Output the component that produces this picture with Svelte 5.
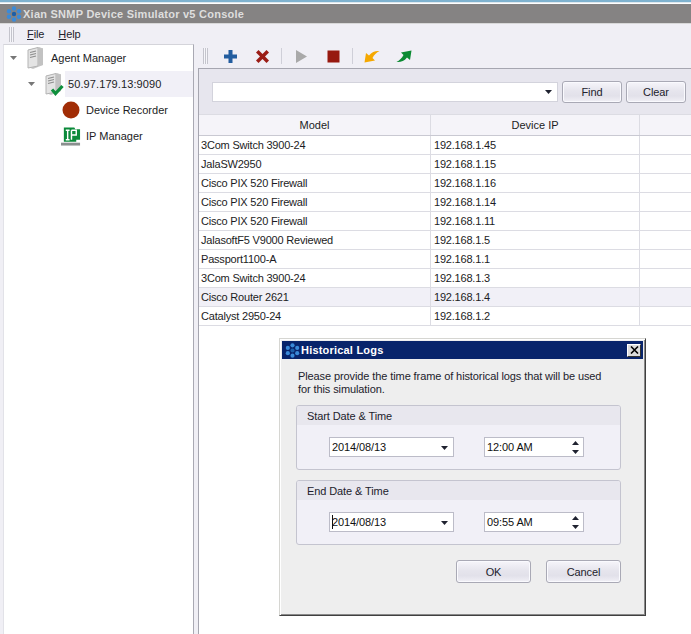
<script>
  const rows = [
    ['3Com Switch 3900-24', '192.168.1.45'],
    ['JalaSW2950', '192.168.1.15'],
    ['Cisco PIX 520 Firewall', '192.168.1.16'],
    ['Cisco PIX 520 Firewall', '192.168.1.14'],
    ['Cisco PIX 520 Firewall', '192.168.1.11'],
    ['JalasoftF5 V9000 Reviewed', '192.168.1.5'],
    ['Passport1100-A', '192.168.1.1'],
    ['3Com Switch 3900-24', '192.168.1.3'],
    ['Cisco Router 2621', '192.168.1.4'],
    ['Catalyst 2950-24', '192.168.1.2']
  ];
  const groups = [
    { title: 'Start Date & Time', date: '2014/08/13', time: '12:00 AM', caret: false },
    { title: 'End Date & Time', date: '2014/08/13', time: '09:55 AM', caret: true }
  ];
</script>

{#snippet snow(size)}
  <svg class="snow" width={size} height={size} viewBox="0 0 16 16">
    <g fill="#3a8ad8">
      <circle cx="8" cy="2.5" r="2.2" /><circle cx="8" cy="13.5" r="2.2" />
      <circle cx="3" cy="5.2" r="2.2" /><circle cx="13" cy="5.2" r="2.2" />
      <circle cx="3" cy="10.8" r="2.2" /><circle cx="13" cy="10.8" r="2.2" />
      <circle cx="8" cy="8" r="2.2" fill="#1c5fa8" />
    </g>
  </svg>
{/snippet}

{#snippet server(check)}
  <svg width="20" height="24" viewBox="0 0 20 24">
    <path d="M2 4 L13 1 L17 2.500 V19 L7 23 L2 21 Z" fill="#c9c9c9" />
    <path d="M2 4 L12 1.500 V20 L2 22 Z" fill="#e4e4e4" stroke="#b4b4b4" stroke-width="1" />
    <path d="M12 1.500 L17 2.500 V19 L12 20 Z" fill="#c2c2c2" />
    <path d="M4 6.500 L10 5M4 9 L10 7.500M4 11.500 L10 10" stroke="#8e8e8e" stroke-width="1.200" />
    {#if check}
      <path d="M8 17.500 L11.500 21.500 L18.500 14" fill="none" stroke="#0e8f3c" stroke-width="3.200" />
    {/if}
  </svg>
{/snippet}

{#snippet updown()}
  <span class="spin">
    <svg width="9" height="17" viewBox="0 0 9 17">
      <path d="M4.5 2 L8 6 H1 Z M4.5 15 L1 11 H8 Z" fill="#1f2230" />
    </svg>
  </span>
{/snippet}

{#snippet ddarrow()}
  <svg class="arrow" width="7" height="4" viewBox="0 0 7 4"><path d="M0 0H7L3.5 4Z" fill="#1f2230" /></svg>
{/snippet}

<div class="app">
  <div class="topline"></div>
  <div class="titlebar">
    {@render snow(16)}
    <span class="apptitle">Xian SNMP Device Simulator v5 Console</span>
  </div>
  <div class="menubar">
    <span class="grip"></span>
    <span class="menu"><u>F</u>ile</span>
    <span class="menu"><u>H</u>elp</span>
  </div>
  <div class="main">
    <aside class="tree">
      <div class="node n0">
        <svg class="exp" width="7" height="4" viewBox="0 0 7 4"><path d="M0 0H7L3.5 4Z" fill="#777" /></svg>
        <span class="ico">{@render server(false)}</span>
        <span class="label">Agent Manager</span>
      </div>
      <div class="node n1">
        <svg class="exp" width="7" height="4" viewBox="0 0 7 4"><path d="M0 0H7L3.5 4Z" fill="#777" /></svg>
        <span class="ico">{@render server(true)}</span>
        <span class="label sel">50.97.179.13:9090</span>
      </div>
      <div class="node n2">
        <span class="ico">
          <svg width="18" height="18" viewBox="0 0 18 18"><circle cx="9" cy="9" r="8.5" fill="#a12d06" /></svg>
        </span>
        <span class="label">Device Recorder</span>
      </div>
      <div class="node n2">
        <span class="ico">
          <svg width="21" height="21" viewBox="0 0 21 21">
            <path d="M3 1 H14 L15 3 H20 V14 H16 V16 H3 Z" fill="#0b8a3a" />
            <path d="M7 4v10M5 4h4M5 14h4M11 4v10M11 4h5v5h-5" fill="none" stroke="#fff" stroke-width="1.500" />
            <rect x="0" y="17" width="20" height="3" fill="#8a8f8f" />
          </svg>
        </span>
        <span class="label">IP Manager</span>
      </div>
    </aside>
    <section class="content">
      <div class="toolbar">
        <span class="grip"></span>
        <button class="tool first" aria-label="Add">
          <svg width="15" height="15" viewBox="0 0 15 15"><path d="M5.500 1H9.500V5.500H14V9.500H9.500V14H5.500V9.500H1V5.500H5.500Z" fill="#235d9f" /></svg>
        </button>
        <button class="tool" aria-label="Delete">
          <svg width="15" height="15" viewBox="0 0 15 15"><path d="M3.500 1L7.500 5L11.500 1L14 3.500L10 7.500L14 11.500L11.500 14L7.500 10L3.500 14L1 11.500L5 7.500L1 3.500Z" fill="#9b1d16" /></svg>
        </button>
        <span class="sep"></span>
        <button class="tool" aria-label="Play">
          <svg width="15" height="15" viewBox="0 0 15 15"><path d="M2 1L13 7.500L2 14Z" fill="#a9a9a9" /></svg>
        </button>
        <button class="tool" aria-label="Stop">
          <svg width="15" height="15" viewBox="0 0 15 15"><rect x="1.500" y="1.500" width="12" height="12" fill="#97190f" /></svg>
        </button>
        <span class="sep"></span>
        <button class="tool" aria-label="Back">
          <svg width="16" height="13" viewBox="0 0 16 13"><path d="M0.500 12.500L2 3L5 5.500C8 1.500 12 0.500 15.500 1C12.500 2.500 10 5 8.500 8L11 10.500Z" fill="#f5a800" /></svg>
        </button>
        <button class="tool" aria-label="Forward">
          <svg width="16" height="13" viewBox="0 0 16 13"><path d="M15.500 0.500L14 10L11 7.500C8 11.500 4 12.500 0.500 12C3.500 10.500 6 8 7.500 5L5 2.500Z" fill="#0b8a32" /></svg>
        </button>
      </div>
      <div class="filter">
        <div class="combo filtercombo">{@render ddarrow()}</div>
        <button class="btn find">Find</button>
        <button class="btn find">Clear</button>
      </div>
      <div class="grid">
        <div class="row head">
          <div class="c1">Model</div>
          <div class="c2">Device IP</div>
          <div class="c3"></div>
        </div>
        {#each rows as r, i}
          <div class="row" class:hl={i === 8}>
            <div class="c1">{r[0]}</div>
            <div class="c2">{r[1]}</div>
            <div class="c3"></div>
          </div>
        {/each}
      </div>
    </section>
  </div>

  <div class="dialog">
    <div class="dtitle">
      {@render snow(15)}
      <span class="dname">Historical Logs</span>
      <span class="close">
        <svg width="9" height="8" viewBox="0 0 9 8"><path d="M1 0.500L8 7.500M8 0.500L1 7.500" stroke="#000" stroke-width="1.600" /></svg>
      </span>
    </div>
    <div class="dbody">
      <p class="desc">Please provide the time frame of historical logs that will be used<br />for this simulation.</p>
      {#each groups as g}
        <div class="group">
          <div class="ghead">{g.title}</div>
          <div class="gbody">
            <div class="combo date">
              {#if g.caret}<span class="caret"></span>{/if}
              <span>{g.date}</span>
              {@render ddarrow()}
            </div>
            <div class="combo time">
              <span>{g.time}</span>
              {@render updown()}
            </div>
          </div>
        </div>
      {/each}
      <div class="actions">
        <button class="btn dbtn">OK</button>
        <button class="btn dbtn">Cancel</button>
      </div>
    </div>
  </div>
</div>

<style>
  :global(body) { margin: 0; background: #fff; }
  .app {
    position: relative;
    width: 691px;
    height: 634px;
    overflow: hidden;
    display: flex;
    flex-direction: column;
    font: 11px "Liberation Sans", sans-serif;
    letter-spacing: -0.1px;
    color: #1c1c24;
    background: #f0eff5;
  }
  .topline {
    height: 4px;
    flex: none;
    background: linear-gradient(#7fb2cf 0 2px, #dfe8ee 2px 3px, #fff 3px);
  }
  .titlebar {
    height: 19px;
    flex: none;
    background: #858383;
    display: flex;
    align-items: center;
    padding-left: 6px;
    gap: 1px;
    border-bottom: 1px solid #d8d8d8;
  }
  .apptitle { color: #dedede; font-weight: 700; font-size: 11px; letter-spacing: 0.25px; }
  .menubar {
    height: 20px;
    flex: none;
    display: flex;
    align-items: center;
    background: #f0eff5;
  }
  .grip {
    width: 5px;
    height: 15px;
    margin-left: 9px;
    flex: none;
    background: repeating-linear-gradient(90deg, #c4c4cc 0 1px, #f6f6fa 1px 2px);
  }
  .menu { margin-left: 13px; font-size: 11px; color: #22222c; }
  .menu + .menu { margin-left: 14px; }
  .main { flex: 1; display: flex; min-height: 0; }
  .tree {
    width: 191px;
    margin-left: 3px;
    flex: none;
    background: #fff;
    border-top: 1px solid #d4d4da;
    border-right: 1px solid #a9a9b3;
    border-left: 1px solid #e2e2e8;
    box-sizing: border-box;
    letter-spacing: 0;
  }
  .node { height: 26px; display: flex; align-items: center; position: relative; }
  .exp { flex: none; margin-left: 6px; }
  .ico { display: flex; align-items: center; justify-content: center; flex: none; width: 20px; }
  .n0 .ico { margin-left: 9px; }
  .n0 .label { margin-left: 5px; }
  .n1 { padding-left: 17px; }
  .n1 .exp { margin-left: 7px; }
  .n1 .ico { margin-left: 9px; }
  .n1 .label.sel {
    flex: 1;
    margin-left: 1px;
    padding-left: 3px;
    line-height: 26px;
    background: #f1f0f7;
    letter-spacing: 0.1px;
  }
  .n2 { padding-left: 57px; }
  .n2 .label { margin-left: 5px; }
  .content {
    flex: 1;
    margin-left: 4px;
    min-width: 0;
    display: flex;
    flex-direction: column;
  }
  .toolbar {
    height: 24px;
    flex: none;
    display: flex;
    align-items: center;
  }
  .toolbar .grip { margin-left: 5px; height: 16px; }
  .tool {
    width: 32px;
    height: 22px;
    padding: 0;
    border: 0;
    background: none;
    display: flex;
    align-items: center;
    justify-content: center;
  }
  .tool.first { margin-left: 6px; }
  .sep { width: 1px; height: 16px; background: #cfcfd8; flex: none; margin: 0 3px; }
  .filter {
    height: 46px;
    flex: none;
    box-sizing: border-box;
    background: #e7e6ee;
    border-top: 1px solid #a6a6b0;
    border-left: 1px solid #a6a6b0;
    display: flex;
    align-items: center;
    padding: 0 5px 0 13px;
    gap: 4px;
  }
  .combo {
    position: relative;
    display: flex;
    align-items: center;
    box-sizing: border-box;
    background: #fff;
    border: 1px solid #bcbcc8;
    height: 20px;
    padding-left: 2px;
    color: #111;
  }
  .filtercombo { width: 346px; border-color: #d3d3dc; }
  .arrow { position: absolute; right: 5px; top: 7px; }
  .btn {
    font: inherit;
    letter-spacing: inherit;
    color: #22222c;
    padding: 0;
    border: 1px solid #a9a9b5;
    border-radius: 3px;
    background: linear-gradient(#f6f5fa, #e6e5ed 45%, #e2e1ea 70%, #f1f0f6);
    box-shadow: inset 0 0 0 1px #fafafe;
  }
  .find { width: 60px; height: 22px; }
  .grid { flex: 1; background: #fff; border-left: 1px solid #a6a6b0; letter-spacing: -0.2px; }
  .row {
    display: flex;
    height: 19px;
    line-height: 18px;
    box-sizing: border-box;
    border-bottom: 1px solid #dcdce3;
    white-space: nowrap;
  }
  .row.head {
    height: 22px;
    line-height: 20px;
    background: #f5f4f9;
    border-top: 1px solid #dcdce3;
    border-bottom: 1px solid #c9c9d2;
    text-align: center;
    letter-spacing: 0;
  }
  .hl { background: #f1f0f7; }
  .c1 { width: 232px; padding-left: 2px; box-sizing: border-box; border-right: 1px solid #dcdce3; }
  .c2 { width: 209px; padding-left: 3px; box-sizing: border-box; border-right: 1px solid #dcdce3; }
  .head .c1, .head .c2 { padding-left: 0; }
  .c3 { flex: 1; }

  .dialog {
    position: absolute;
    left: 279px;
    top: 338px;
    width: 367px;
    height: 278px;
    box-sizing: border-box;
    background: #eeeeee;
    border: 1px solid;
    border-color: #d6d6d2 #404040 #404040 #d6d6d2;
    box-shadow: inset 1px 1px 0 #fff, inset -1px -1px 0 #8a8a8a;
    padding: 2px;
    display: flex;
    flex-direction: column;
  }
  .dtitle {
    height: 18px;
    flex: none;
    background: #08246b;
    display: flex;
    align-items: center;
    padding-left: 3px;
    gap: 1px;
  }
  .dname { color: #fff; font-weight: 700; font-size: 11px; letter-spacing: 0.2px; }
  .close {
    margin-left: auto;
    margin-right: 2px;
    width: 14px;
    height: 13px;
    box-sizing: border-box;
    background: #dcdcdc;
    border: 1px solid;
    border-color: #fff #333 #333 #fff;
    display: flex;
    align-items: center;
    justify-content: center;
  }
  .dbody { padding: 11px 0 0 14px; flex: 1; }
  .desc { margin: 0 0 9px 2px; line-height: 13px; color: #22222c; }
  .group {
    width: 325px;
    height: 65px;
    box-sizing: border-box;
    border: 1px solid #c4c4cf;
    border-radius: 3px;
    background: #f1f0f7;
    margin-bottom: 10px;
    overflow: hidden;
  }
  .ghead {
    height: 19px;
    line-height: 20px;
    padding-left: 10px;
    background: #e8e7ee;
    color: #22222c;
  }
  .gbody { display: flex; align-items: center; padding: 12px 0 0 32px; }
  .date { width: 125px; }
  .time { width: 100px; margin-left: 30px; }
  .combo .arrow { top: 8px; }
  .filtercombo .arrow { top: 7px; }
  .spin { position: absolute; right: 3px; top: 1px; display: flex; }
  .caret { position: absolute; left: 2px; top: 2px; width: 1px; height: 14px; background: #111; }
  .actions { width: 325px; display: flex; justify-content: flex-end; gap: 15px; margin-top: 15px; }
  .dbtn { width: 75px; height: 23px; }
</style>
